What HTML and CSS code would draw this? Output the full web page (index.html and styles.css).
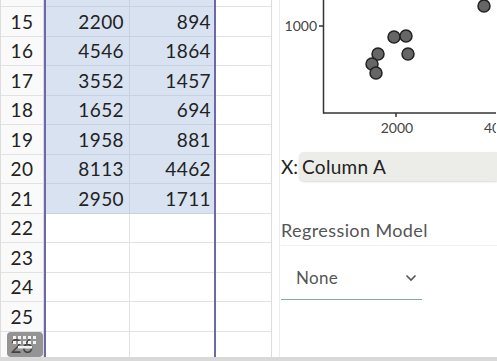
FILE: index.html
```html
<!DOCTYPE html>
<html lang="en">

<head>
    <meta charset="UTF-8">
    <meta name="viewport" content="width=device-width, initial-scale=1.0">
    <title>Regression</title>
    <link rel="stylesheet" href="styles.css">
</head>

<body>
    <div class="main">
        <div class="sheet">
            <div class="col num">
                <div class="cell top"></div>
                <div class="cell">15</div>
                <div class="cell">16</div>
                <div class="cell">17</div>
                <div class="cell">18</div>
                <div class="cell">19</div>
                <div class="cell">20</div>
                <div class="cell">21</div>
                <div class="cell">22</div>
                <div class="cell">23</div>
                <div class="cell">24</div>
                <div class="cell">25</div>
                <div class="cell">26</div>
            </div>
            <div class="sel">
                <div class="col colA">
                    <div class="cell top on"></div>
                    <div class="cell on">2200</div>
                    <div class="cell on">4546</div>
                    <div class="cell on">3552</div>
                    <div class="cell on">1652</div>
                    <div class="cell on">1958</div>
                    <div class="cell on">8113</div>
                    <div class="cell on">2950</div>
                    <div class="cell"></div>
                    <div class="cell"></div>
                    <div class="cell"></div>
                    <div class="cell"></div>
                    <div class="cell"></div>
                </div>
                <div class="col colB">
                    <div class="cell top on"></div>
                    <div class="cell on">894</div>
                    <div class="cell on">1864</div>
                    <div class="cell on">1457</div>
                    <div class="cell on">694</div>
                    <div class="cell on">881</div>
                    <div class="cell on">4462</div>
                    <div class="cell on">1711</div>
                    <div class="cell"></div>
                    <div class="cell"></div>
                    <div class="cell"></div>
                    <div class="cell"></div>
                    <div class="cell"></div>
                </div>
            </div>
            <div class="col colC">
                <div class="cell top"></div>
                <div class="cell"></div>
                <div class="cell"></div>
                <div class="cell"></div>
                <div class="cell"></div>
                <div class="cell"></div>
                <div class="cell"></div>
                <div class="cell"></div>
                <div class="cell"></div>
                <div class="cell"></div>
                <div class="cell"></div>
                <div class="cell"></div>
                <div class="cell"></div>
            </div>

            <!-- keyboard toggle -->
            <div class="kbd">
                <svg width="26" height="16" viewBox="0 0 26 16">
                    <g fill="#f2f2f2">
                        <rect x="1" y="1" width="3" height="3" />
                        <rect x="6" y="1" width="3" height="3" />
                        <rect x="11" y="1" width="3" height="3" />
                        <rect x="16" y="1" width="3" height="3" />
                        <rect x="21" y="1" width="3" height="3" />
                        <rect x="1" y="6" width="3" height="3" />
                        <rect x="6" y="6" width="3" height="3" />
                        <rect x="11" y="6" width="3" height="3" />
                        <rect x="16" y="6" width="3" height="3" />
                        <rect x="21" y="6" width="3" height="3" />
                        <rect x="6" y="11" width="14" height="2.5" />
                    </g>
                </svg>
            </div>
        </div>

        <div class="split"></div>

        <div class="panel">
            <svg class="chart" width="216" height="140" viewBox="281 0 216 140">
                <g stroke="#333" stroke-width="1.5" fill="none">
                    <line x1="324.5" y1="0" x2="324.5" y2="113.5" />
                    <line x1="324" y1="113" x2="497" y2="113" />
                    <line x1="320" y1="26" x2="324" y2="26" />
                    <line x1="397" y1="113" x2="397" y2="117" />
                </g>
                <g class="tick" fill="#444">
                    <text x="318" y="31" text-anchor="end">1000</text>
                    <text x="398" y="133" text-anchor="middle">2000</text>
                    <text x="485" y="133">4000</text>
                </g>
                <g fill="#666" stroke="#222" stroke-width="1.5">
                    <circle cx="485" cy="6" r="6" />
                    <circle cx="395" cy="37" r="6" />
                    <circle cx="407" cy="36" r="6" />
                    <circle cx="379" cy="54" r="6" />
                    <circle cx="409" cy="54" r="6" />
                    <circle cx="373" cy="64" r="6" />
                    <circle cx="377" cy="73" r="6" />
                </g>
            </svg>

            <div class="xrow">
                <span class="xlab">X:</span>
                <div class="xbox">Column A</div>
            </div>

            <div class="model">Regression Model</div>

            <div class="drop">
                <span>None</span>
                <svg width="12" height="8" viewBox="0 0 12 8">
                    <path d="M1.5 1.5 L6 6 L10.5 1.5" stroke="#555" stroke-width="1.6" fill="none" />
                </svg>
            </div>
        </div>
    </div>
    <div class="foot"></div>
</body>

</html>
```

FILE: styles.css
```css
* {
    margin: 0;
    padding: 0;
    box-sizing: border-box;
}

body {
    width: 497px;
    height: 361px;
    overflow: hidden;
    background-color: #fff;
    font-family: "Lato", "Open Sans", sans-serif;
    color: #222;
}

.main {
    height: 357px;
    display: flex;
    overflow: hidden;
}

.sheet {
    position: relative;
    display: flex;
    border-left: 1px solid #ddd;
}

.col {
    display: flex;
    flex-direction: column;
}

.cell {
    flex: none;
    height: 29.5px;
    border-bottom: 1px solid #e2e2e2;
    display: flex;
    align-items: center;
    font-size: 19px;
    letter-spacing: 0.4px;
}

.cell.top {
    height: 7px;
}

.num {
    width: 43px;
    background-color: #fafafa;
    border-right: 1px solid #dcdcdc;
}

.num .cell {
    justify-content: center;
}

.sel {
    display: flex;
    border-left: 2px solid #6c68aa;
    border-right: 2px solid #6c68aa;
}

.colA {
    width: 84px;
    border-right: 1px solid #e2e2e2;
}

.colB {
    width: 84px;
}

.colA .cell,
.colB .cell {
    justify-content: flex-end;
}

.colA .cell {
    padding-right: 5px;
}

.colB .cell {
    padding-right: 3px;
}

.cell.on {
    background-color: #d8e2f1;
    border-bottom-color: #c7d1e0;
}

.colA .cell.on {
    box-shadow: 1px 0 0 #c7d1e0;
}

.colC {
    width: 56px;
    border-right: 1px solid #dcdcdc;
}

.kbd {
    position: absolute;
    left: 6px;
    top: 332px;
    width: 36px;
    height: 25px;
    border-radius: 4px;
    background-color: rgba(85, 85, 85, 0.62);
    display: flex;
    justify-content: center;
    padding-top: 3px;
}

.split {
    width: 8px;
    border-right: 1px solid #ececec;
}

.panel {
    flex: 1;
    display: flex;
    flex-direction: column;
    padding-left: 1px;
}

.chart {
    display: block;
    margin-left: -1px;
}

.tick {
    font-size: 14px;
    font-family: "Lato", sans-serif;
}

.xrow {
    margin-top: 12px;
    display: flex;
    align-items: center;
    height: 29px;
}

.xlab {
    width: 18px;
    font-size: 19px;
}

.xbox {
    flex: 1;
    height: 29px;
    display: flex;
    align-items: center;
    padding-left: 3px;
    font-size: 19px;
    letter-spacing: 0.3px;
    background-color: #ecece8;
    border-radius: 5px 0 0 5px;
    box-shadow: 0 1px 2px rgba(0, 0, 0, 0.15);
}

.model {
    margin-top: 38px;
    padding-bottom: 4px;
    font-size: 18px;
    letter-spacing: 0.4px;
    color: #555;
    border-bottom: 1px solid #f0f0f0;
}

.drop {
    margin-top: 22px;
    width: 141px;
    height: 32px;
    display: flex;
    align-items: center;
    justify-content: space-between;
    padding: 0 5px 12px 15px;
    font-size: 17px;
    letter-spacing: 0.3px;
    color: #555;
    border-bottom: 1px solid #7fae9f;
}

.foot {
    height: 4px;
    background-color: #d9d9d9;
}
```
